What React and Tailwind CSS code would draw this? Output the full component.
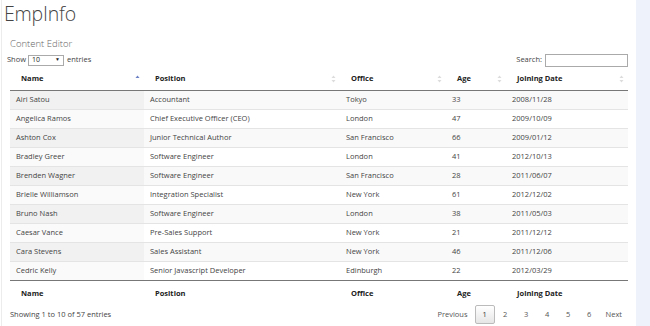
import React from 'react';

const rows = [
    ['Airi Satou', 'Accountant', 'Tokyo', '33', '2008/11/28'],
    ['Angelica Ramos', 'Chief Executive Officer (CEO)', 'London', '47', '2009/10/09'],
    ['Ashton Cox', 'Junior Technical Author', 'San Francisco', '66', '2009/01/12'],
    ['Bradley Greer', 'Software Engineer', 'London', '41', '2012/10/13'],
    ['Brenden Wagner', 'Software Engineer', 'San Francisco', '28', '2011/06/07'],
    ['Brielle Williamson', 'Integration Specialist', 'New York', '61', '2012/12/02'],
    ['Bruno Nash', 'Software Engineer', 'London', '38', '2011/05/03'],
    ['Caesar Vance', 'Pre-Sales Support', 'New York', '21', '2011/12/12'],
    ['Cara Stevens', 'Sales Assistant', 'New York', '46', '2011/12/06'],
    ['Cedric Kelly', 'Senior Javascript Developer', 'Edinburgh', '22', '2012/03/29'],
];

const cols = [
    { label: 'Name', w: 'w-[134px]' },
    { label: 'Position', w: 'w-[196px]' },
    { label: 'Office', w: 'w-[106px]' },
    { label: 'Age', w: 'w-[60px]' },
    { label: 'Joining Date', w: 'w-[122px]' },
];

const SortIcon = ({ active }) => (
    <svg width="5" height="8" viewBox="0 0 5 8" className="shrink-0">
        <path d="M2.5 0.5 L4.5 3 L0.5 3 Z" fill={active ? '#6b7fc4' : '#dcdcdc'} />
        {!active && <path d="M2.5 7.5 L4.5 5 L0.5 5 Z" fill="#dcdcdc" />}
    </svg>
);

export default function App() {
    return (
        <div className="relative flex h-[326px] w-[650px] overflow-hidden bg-white text-[#444]" style={{ fontFamily: '"Open Sans", "Noto Sans", sans-serif' }}>
            <div className="w-[2px] shrink-0 border-r border-[#ececec]" />
            <div className="flex w-[634px] flex-col">
                <h1 className="ml-[2px] h-[32px] text-[19.5px] font-light leading-[27px] tracking-[-0.2px] text-[#444]">EmpInfo</h1>
                <div className="ml-[8px] mt-[5px] h-[14px] text-[9.5px] font-light leading-[14px] text-[#666]">Content Editor</div>
                <div className="mt-[2px] flex h-[14px] items-center pl-[5px] pr-[6px] text-[7.5px]">
                    <span>Show</span>
                    <span className="ml-[2px] flex h-[11px] w-[36px] items-center justify-between border border-[#aaa] px-[3px] text-[7px] text-[#222]">
                        <span>10</span>
                        <span className="text-[5px]">▼</span>
                    </span>
                    <span className="ml-[3px]">entries</span>
                    <span className="ml-auto">Search:</span>
                    <span className="ml-[3px] mr-[2px] h-[13px] w-[83px] border border-[#aaa] bg-white" />
                </div>
                <table className="ml-[8px] mt-[1px] w-[618px] table-fixed border-collapse text-[7.5px]">
                    <thead>
                        <tr className="h-[22px] border-b border-[#777]">
                            {cols.map((c, i) => (
                                <th key={c.label} className={`${c.w} px-0 text-left font-bold text-[#222]`}>
                                    <div className="flex items-center justify-between pl-[11px] pr-[4px]">
                                        <span>{c.label}</span>
                                        <SortIcon active={i === 0} />
                                    </div>
                                </th>
                            ))}
                        </tr>
                    </thead>
                    <tbody>
                        {rows.map((r, ri) => (
                            <tr key={r[0]} className={`h-[19px] border-t border-[#e4e4e4] ${ri % 2 === 0 ? 'bg-[#f9f9f9]' : 'bg-white'}`}>
                                {r.map((v, ci) => (
                                    <td key={ci} className={`pl-[6px] ${ci === 0 ? (ri % 2 === 0 ? 'bg-[#f1f1f1]' : 'bg-[#fafafa]') : ''}`}>{v}</td>
                                ))}
                            </tr>
                        ))}
                    </tbody>
                    <tfoot>
                        <tr className="h-[24px] border-t border-[#777]">
                            {cols.map((c) => (
                                <th key={c.label} className="pl-[11px] pt-[2px] text-left font-bold text-[#222]">{c.label}</th>
                            ))}
                        </tr>
                    </tfoot>
                </table>
                <div className="ml-[8px] mt-[1px] flex w-[618px] items-center text-[7.5px]">
                    <span>Showing 1 to 10 of 57 entries</span>
                    <div className="ml-auto mr-[6px] flex items-center text-[#555]">
                        <span className="mr-[7px]">Previous</span>
                        <span className="flex h-[19px] w-[20px] items-center justify-center rounded-[2px] border border-[#bbb] bg-gradient-to-b from-white to-[#e6e6e6] text-[#333]">1</span>
                        <span className="w-[21px] text-center">2</span>
                        <span className="w-[21px] text-center">3</span>
                        <span className="w-[21px] text-center">4</span>
                        <span className="w-[21px] text-center">5</span>
                        <span className="w-[21px] text-center">6</span>
                        <span className="ml-[6px]">Next</span>
                    </div>
                </div>
            </div>
            <div className="flex-1 bg-[#eef3fb]" />
        </div>
    );
}
